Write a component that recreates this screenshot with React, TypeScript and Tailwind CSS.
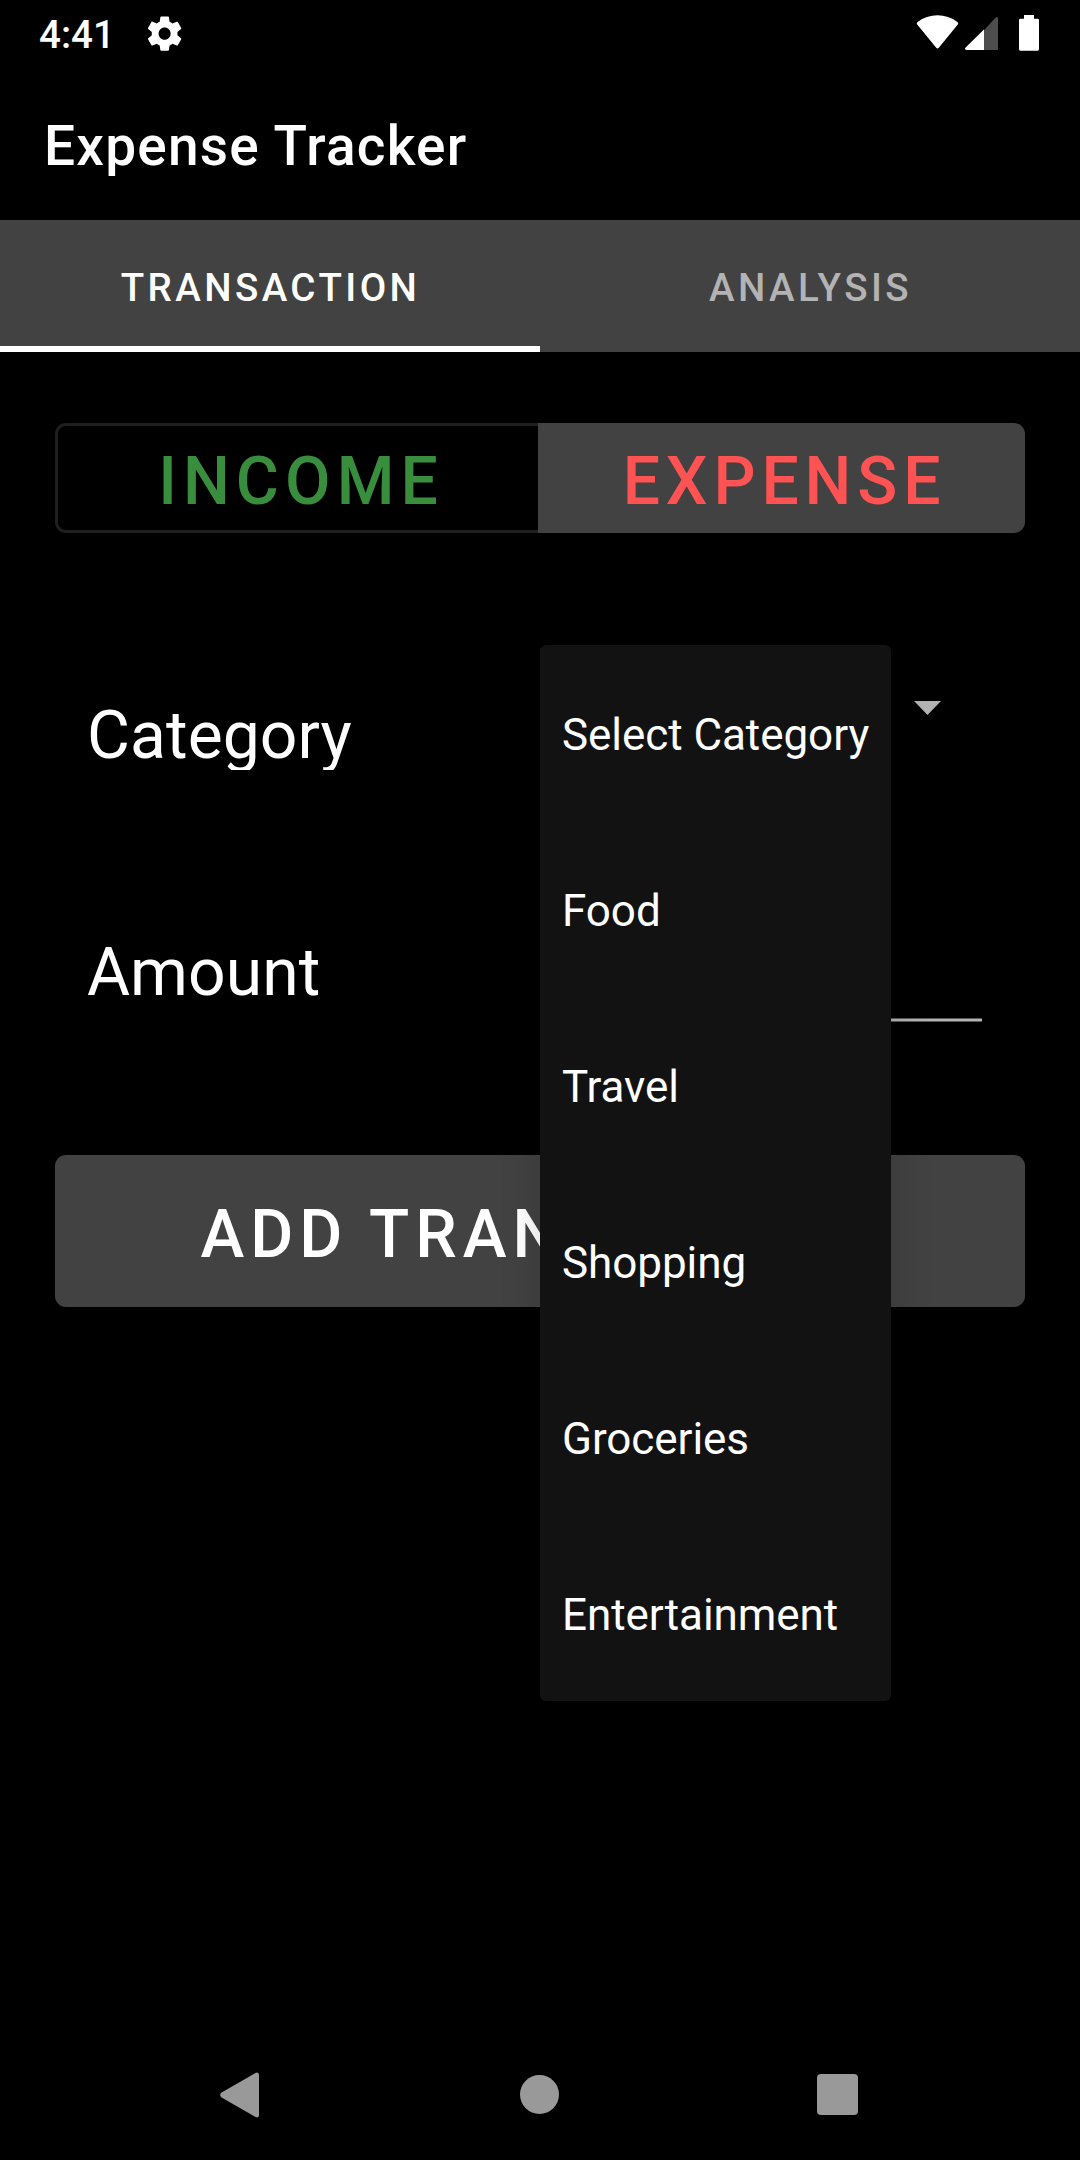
const categories = ["Select Category", "Food", "Travel", "Shopping", "Groceries", "Entertainment"];

function StatusBar() {
  return (
    <header className="flex h-[66px] items-start justify-between pr-[41px] pl-[39px]">
      <div className="flex items-start">
        <span className="w-[104.5px] pt-[15px] text-[38.5px] leading-[40px] font-medium">4:41</span>
        <svg className="mt-[13px] size-[41.25px]" viewBox="0 0 24 24" fill="currentColor">
          <path d="M19.43 12.98c.04-.32.07-.64.07-.98s-.03-.66-.07-.98l2.11-1.65c.19-.15.24-.42.12-.64l-2-3.46c-.12-.22-.39-.3-.61-.22l-2.49 1c-.52-.4-1.08-.73-1.69-.98l-.38-2.65C14.46 2.18 14.25 2 14 2h-4c-.25 0-.46.18-.49.42l-.38 2.65c-.61.25-1.17.59-1.69.98l-2.49-1c-.23-.09-.49 0-.61.22l-2 3.46c-.13.22-.07.49.12.64l2.11 1.65c-.04.32-.07.65-.07.98s.03.66.07.98l-2.11 1.65c-.19.15-.24.42-.12.64l2 3.46c.12.22.39.3.61.22l2.49-1c.52.4 1.08.73 1.69.98l.38 2.65c.03.24.24.42.49.42h4c.25 0 .46-.18.49-.42l.38-2.65c.61-.25 1.17-.59 1.69-.98l2.49 1c.23.09.49 0 .61-.22l2-3.46c.12-.22.07-.49-.12-.64l-2.11-1.65zM12 15.5c-1.93 0-3.5-1.57-3.5-3.5s1.57-3.5 3.5-3.5 3.5 1.57 3.5 3.5-1.57 3.5-3.5 3.5z" />
        </svg>
      </div>
      <div className="flex items-start pt-[15px]">
        <svg className="h-[36px] w-[43px]" viewBox="0 0 43 36" fill="#fff">
          <path d="M1.2 9.6Q0 8 1.6 6.9Q10.5.3 21.5.3T41.4 6.9Q43 8 41.8 9.6L22.8 32.8Q21.5 34.2 20.2 32.8Z" />
        </svg>
        <svg className="ml-[6px] h-[36px] w-[34px]" viewBox="0 0 34 36">
          <path d="M18 16.2L30.5 2.8Q33 .8 33 3.4V34q0 1-1 1H18Z" fill="#4d4d4d" />
          <path d="M19 14.6V35H1.600Q-1 34.6.6 32.6Z" fill="#fff" />
        </svg>
        <svg className="ml-[20px] h-[36px] w-[20px]" viewBox="0 0 20 36" fill="#fff">
          <path d="M5 0h10v3.7h3.6q1.4 0 1.4 1.4v29q0 1.6-1.4 1.6H1.4Q0 35.7 0 34.1V5.1q0-1.4 1.4-1.4H5Z" />
        </svg>
      </div>
    </header>
  );
}

function Tabs() {
  return (
    <nav className="grid h-[132px] grid-cols-2 bg-[#424242] text-center text-[38.5px] font-medium">
      <button className="border-b-[6px] border-white pt-[9px] pl-px leading-[117px] tracking-[0.0893em] uppercase">Transaction</button>
      <button className="border-b-[6px] border-transparent pt-[9px] pl-px leading-[117px] tracking-[0.0893em] text-[#b3b3b3] uppercase">Analysis</button>
    </nav>
  );
}

function CategoryMenu() {
  return (
    <ul className="absolute top-0 left-0 z-10 w-[351px] rounded-[6px] bg-[#121212] shadow-[0_8px_40px_rgba(0,0,0,0.16)]">
      {categories.map((name) => (
        <li key={name} className="h-[176px] px-[22px] pt-[2px] text-[44px] leading-[176px] tracking-[-0.06px] whitespace-nowrap">
          {name}
        </li>
      ))}
    </ul>
  );
}

export default function App() {
  return (
    <div className="flex h-[2160px] w-[1080px] flex-col overflow-hidden bg-black font-[Roboto,sans-serif] text-white">
      <StatusBar />
      <h1 className="h-[154px] pl-[44px] text-[55px] leading-[160px] font-medium tracking-[1.2px]">Expense Tracker</h1>
      <Tabs />
      <main className="flex grow flex-col px-[55px] pt-[71px]">
        <div className="flex h-[110px] text-[66px] font-medium">
          <button className="w-[483px] rounded-l-[11px] border-[3px] border-r-0 border-[#1f1f1f] pt-[8px] pl-[6px] leading-[96px] tracking-[6.1px] text-[#388e3c]">INCOME</button>
          <button className="w-[487px] rounded-r-[11px] bg-[#424242] pt-[8px] pl-[6px] leading-[102px] tracking-[0.0893em] text-[#ff5252]">EXPENSE</button>
        </div>
        <div className="relative mt-[112px] grid h-[510px] grid-cols-2">
          <div className="pl-[32px] text-[66px] tracking-[0.06px]">
            <div className="h-[125px] overflow-hidden leading-[181px]">Category</div>
            <div className="mt-[153px] leading-[99px]">Amount</div>
          </div>
          <div className="relative">
            <CategoryMenu />
            <svg className="mt-[56px] ml-[373.5px] h-[14px] w-[27px]" viewBox="0 0 27 14">
              <path d="M0 0H27L13.5 14Z" fill="#b3b3b3" />
            </svg>
            <div className="mt-[303px] ml-[11px] h-[4px] w-[431px] border-y border-[#5a5a5a] bg-[#b3b3b3]" />
          </div>
        </div>
        <button className="h-[152px] rounded-[11px] bg-[#424242] pt-[8px] pl-[4px] text-[66px] leading-[144px] font-medium tracking-[5.95px] whitespace-nowrap">ADD TRANSACTION</button>
      </main>
      <footer className="flex h-[131px] items-center justify-between pr-[222px] pl-[220px]">
        <svg className="h-[46px] w-[39px]" viewBox="0 0 39 46" fill="#999">
          <path d="M1.2 20.8L35.5.9Q39-.5 39 3V43Q39 46.5 35.5 45.1L1.2 25.2Q-.8 23 1.2 20.8Z" />
        </svg>
        <div className="ml-[4px] size-[39px] rounded-full bg-[#999]" />
        <div className="size-[41.5px] rounded-[4px] bg-[#999]" />
      </footer>
    </div>
  );
}
